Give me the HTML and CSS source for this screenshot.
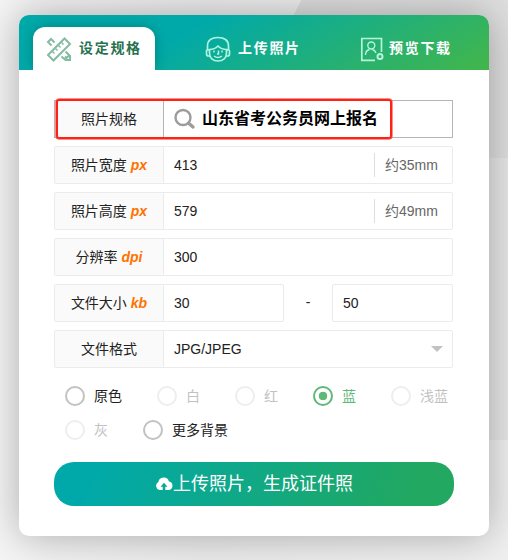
FILE: index.html
```html
<!DOCTYPE html>
<html lang="zh-CN">
<head>
<meta charset="utf-8">
<title>设定规格</title>
<link rel="stylesheet" href="styles.css">
</head>
<body>
<main class="card">
  <nav class="tabs">
    <div class="tab active">
      <svg class="tab-icon" width="26" height="26" viewBox="0 0 26 26" fill="none" stroke="#84bba2" stroke-width="2">
        <path d="M2 19 18.500 2.500 24 8 7.500 24.500Z"/>
        <path d="M6.500 15.500l2 2M9.500 12.500l2 2M12.500 9.500l2 2M15.500 6.500l2 2" stroke-width="1.500"/>
        <path d="M8.500 6.500 5 3 2 6 5.500 9.500"/>
        <path d="M19.500 15.500 24 20V24H19.500L15.500 20.500M19 20.500l1.500 1.500 2-2"/>
      </svg>
      <span>设定规格</span>
    </div>
    <div class="tab upload">
      <svg class="tab-icon" width="26" height="26" viewBox="0 0 26 26" fill="none" stroke="#aef5df" stroke-width="1.700">
        <path d="M2.500 14V10C2.500 4 7 1.500 13 1.500S23.500 4 23.500 10v4"/>
        <path d="M4.500 13.500c4 0 6.500-1.500 8.500-3.500 2 2 4.500 3.500 8.500 3.500V17c0 5-3.500 8-8.500 8s-8.500-3-8.500-8z"/>
        <path d="M4 14H2.500a1 1 0 0 0-1 1v3a2 2 0 0 0 2 2H5M22 14h1.500a1 1 0 0 1 1 1v3a2 2 0 0 1-2 2H21"/>
        <path d="M9 14.500v2M17 14.500v2M13.500 14.500v3.500h-1.500M9 20q4 3 8 0" stroke-width="1.500"/>
      </svg>
      <span>上传照片</span>
    </div>
    <div class="tab download">
      <svg class="tab-icon" width="24" height="26" viewBox="0 0 24 26" fill="none" stroke="#b5f5db" stroke-width="1.700">
        <path d="M15 24.300H1.800V2.500H21.500V16"/>
        <circle cx="11.300" cy="9.500" r="3.500" stroke-width="1.400"/>
        <path d="M5.500 19c0-3 2-5 4-5.500M12.500 13.500c2 .8 3 2 3.500 3.500" stroke-width="1.400"/>
        <circle cx="20" cy="20.500" r="2.500" stroke-width="2"/>
      </svg>
      <span>预览下载</span>
    </div>
  </nav>

  <form class="form">
    <div class="row spec">
      <div class="label">照片规格</div>
      <div class="field">
        <svg class="search" width="22" height="22" viewBox="0 0 22 22" fill="none" stroke="#9c9c9c">
          <circle cx="9" cy="9.500" r="7.500" stroke-width="2.400"/>
          <path d="M15 15.500 19 19" stroke-width="3.400" stroke-linecap="round"/>
        </svg>
        <strong>山东省考公务员网上报名</strong>
      </div>
      <div class="highlight"></div>
    </div>
    <div class="row">
      <div class="label">照片宽度 <em>px</em></div>
      <div class="field">413<span class="unit">约35mm</span></div>
    </div>
    <div class="row">
      <div class="label">照片高度 <em>px</em></div>
      <div class="field">579<span class="unit">约49mm</span></div>
    </div>
    <div class="row">
      <div class="label">分辨率 <em>dpi</em></div>
      <div class="field">300</div>
    </div>
    <div class="range">
      <div class="row">
        <div class="label">文件大小 <em>kb</em></div>
        <div class="field">30</div>
      </div>
      <span class="dash">-</span>
      <div class="row max"><div class="field">50</div></div>
    </div>
    <div class="row">
      <div class="label">文件格式</div>
      <div class="field">JPG/JPEG<i class="caret"></i></div>
    </div>

    <div class="colors">
      <div class="radio"><i></i>原色</div>
      <div class="radio disabled"><i></i>白</div>
      <div class="radio disabled"><i></i>红</div>
      <div class="radio checked"><i></i>蓝</div>
      <div class="radio disabled"><i></i>浅蓝</div>
      <div class="radio disabled"><i></i>灰</div>
      <div class="radio"><i></i>更多背景</div>
    </div>

    <div class="submit">
      <svg width="18" height="14" viewBox="0 0 18 14">
        <path fill="#fff" fill-rule="evenodd" d="M4.500 13A4.200 4.200 0 0 1 3.300 5.200 5.500 5.500 0 0 1 14 4.500 4.300 4.300 0 0 1 13.500 13H10.300V9.800H12.500L9 5.800 5.500 9.800H7.700V13Z"/>
      </svg>
      <span>上传照片，生成证件照</span>
    </div>
  </form>
</main>
</body>
</html>
```
FILE: styles.css
```css
* {
  box-sizing: border-box;
}

body {
  margin: 0;
  height: 560px;
  padding: 15px 19px 24px;
  overflow: hidden;
  background:
    linear-gradient(117deg, transparent 268px, rgba(0, 0, 0, 0.07) 269px) 0 0 / 508px 158px no-repeat,
    linear-gradient(rgba(0, 0, 0, 0.04), rgba(0, 0, 0, 0.04)) 100% 158px / 60px 282px no-repeat,
    linear-gradient(90deg, #f5f5f5 0%, #ececec 40%, #f0f0f0 100%);
  font: 14px/20px "Liberation Sans", "Noto Sans CJK SC", sans-serif;
  color: #222;
}

.card {
  height: 521px;
  border-radius: 10px;
  background: #fff;
  box-shadow: 0 0 40px rgba(0, 0, 0, 0.3);
}

.tabs {
  display: flex;
  align-items: flex-end;
  height: 55px;
  padding-left: 14px;
  border-radius: 10px 10px 0 0;
  overflow: hidden;
  background: linear-gradient(150deg, #00a9a9 35%, #43b649 100%);
}

.tab {
  display: flex;
  align-items: center;
  height: 43px;
  color: #fff;
  font-size: 14px;
  font-weight: 700;
  letter-spacing: 1.700px;
  white-space: nowrap;
}

.tab.active {
  width: 122px;
  padding-left: 13px;
  gap: 7px;
  border-radius: 12px 12px 0 0;
  background: #fff;
  color: #28714f;
  box-shadow: 0 0 12px rgba(0, 60, 60, 0.35);
}

.tab.upload {
  width: 205px;
  padding-left: 50px;
  gap: 7px;
}

.tab.download {
  gap: 5px;
}

.tab span {
  position: relative;
  top: -1px;
}

.tab-icon {
  flex: none;
}

.form {
  width: 399px;
  margin: 30px 0 0 35px;
}

.row {
  display: flex;
  height: 38px;
  margin-bottom: 8px;
  border: 1px solid #ebebeb;
  border-radius: 2px;
}

.label {
  width: 109px;
  line-height: 36px;
  text-align: center;
  background: #fafafa;
  border-right: 1px solid #ebebeb;
}

.label em {
  color: #ff7200;
  font-weight: 700;
}

.field {
  flex: 1;
  display: flex;
  align-items: center;
  padding-left: 10px;
}

.unit {
  width: 78px;
  height: 24px;
  margin-left: auto;
  padding-left: 10px;
  border-left: 1px solid #dedede;
  line-height: 24px;
  color: #666;
}

.spec {
  position: relative;
  border-color: #b5b5b5;
  border-radius: 0;
}

.spec .label {
  border-color: #b5b5b5;
}

.spec strong {
  margin-left: 6px;
  font-size: 16px;
  color: #000;
  white-space: nowrap;
}

.highlight {
  position: absolute;
  top: -2px;
  left: 1px;
  width: 336px;
  height: 40px;
  border: 2px solid #fd2117;
  border-radius: 3px;
  box-shadow: 0 0 0 0.5px #fd2117;
}

.range {
  display: flex;
}

.range .row {
  width: 230px;
}

.range .max {
  width: 121px;
}

.dash {
  width: 48px;
  line-height: 36px;
  text-align: center;
}

.caret {
  margin: 0 9px 0 auto;
  border: 6px solid transparent;
  border-top-color: #c2c2c2;
  border-bottom: 0;
}

.colors {
  display: flex;
  flex-wrap: wrap;
  gap: 14px 35px;
  padding: 10px 0 0 11px;
  margin-right: -10px;
}

.radio {
  display: flex;
  align-items: center;
  gap: 9px;
  height: 20px;
}

.radio i {
  width: 20px;
  height: 20px;
  border: 2px solid #c2c2c2;
  border-radius: 50%;
}

.radio.disabled {
  color: #c2c2c2;
}

.radio.disabled i {
  border-color: #eee;
}

.radio.checked {
  color: #5fb878;
}

.radio.checked i {
  border-color: #5fb878;
  background: radial-gradient(circle, #5fb878 4px, transparent 4.600px);
}

.submit {
  display: flex;
  align-items: center;
  justify-content: center;
  width: 400px;
  height: 44px;
  margin-top: 22px;
  border-radius: 20px;
  background: linear-gradient(110deg, #00a9a9 10%, #22a860 90%);
  color: #fff;
  font-size: 18px;
}
```
